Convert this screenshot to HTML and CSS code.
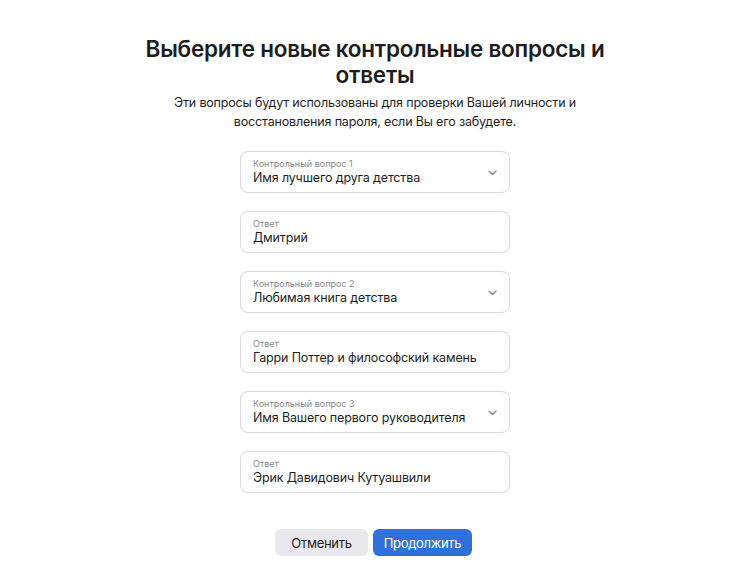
FILE: index.html
```html
<!DOCTYPE html>
<html lang="ru">
<head>
<meta charset="utf-8">
<link rel="stylesheet" href="styles.css">
</head>
<body>
<main class="page">
  <h1 class="title">Выберите новые контрольные вопросы и ответы</h1>
  <p class="subtitle">Эти вопросы будут использованы для проверки Вашей личности и восстановления пароля, если Вы его забудете.</p>
  <div class="fields">
    <div class="field select">
      <div class="field-text">
        <span class="label">Контрольный вопрос 1</span>
        <span class="value">Имя лучшего друга детства</span>
      </div>
      <svg class="chev" width="9" height="6" viewBox="0 0 9 6"><path d="M1 1.2l3.5 3.3L8 1.2" fill="none" stroke="#8a8a8e" stroke-width="1.3" stroke-linecap="round" stroke-linejoin="round"/></svg>
    </div>
    <div class="field">
      <div class="field-text">
        <span class="label">Ответ</span>
        <span class="value">Дмитрий</span>
      </div>
    </div>
    <div class="field select">
      <div class="field-text">
        <span class="label">Контрольный вопрос 2</span>
        <span class="value">Любимая книга детства</span>
      </div>
      <svg class="chev" width="9" height="6" viewBox="0 0 9 6"><path d="M1 1.2l3.5 3.3L8 1.2" fill="none" stroke="#8a8a8e" stroke-width="1.3" stroke-linecap="round" stroke-linejoin="round"/></svg>
    </div>
    <div class="field">
      <div class="field-text">
        <span class="label">Ответ</span>
        <span class="value">Гарри Поттер и философский камень</span>
      </div>
    </div>
    <div class="field select">
      <div class="field-text">
        <span class="label">Контрольный вопрос 3</span>
        <span class="value">Имя Вашего первого руководителя</span>
      </div>
      <svg class="chev" width="9" height="6" viewBox="0 0 9 6"><path d="M1 1.2l3.5 3.3L8 1.2" fill="none" stroke="#8a8a8e" stroke-width="1.3" stroke-linecap="round" stroke-linejoin="round"/></svg>
    </div>
    <div class="field">
      <div class="field-text">
        <span class="label">Ответ</span>
        <span class="value">Эрик Давидович Кутуашвили</span>
      </div>
    </div>
  </div>
  <div class="actions">
    <button class="btn btn-secondary">Отменить</button>
    <button class="btn btn-primary">Продолжить</button>
  </div>
</main>
</body>
</html>
```
FILE: styles.css
```css
* { box-sizing: border-box; }
html, body { margin: 0; background: #ffffff; }
body {
  font-family: Inter, "Noto Sans", "Liberation Sans", sans-serif;
  color: #1d1d1f;
  width: 750px;
  height: 580px;
  overflow: hidden;
}
.page {
  display: flex;
  flex-direction: column;
  align-items: center;
  padding-top: 36px;
}
.title {
  margin: 0;
  width: 480px;
  text-align: center;
  font-size: 22.5px;
  line-height: 26px;
  font-weight: 600;
  letter-spacing: -0.24px;
}
.subtitle {
  margin: 5px 0 0;
  width: 420px;
  text-align: center;
  font-size: 12.5px;
  line-height: 19px;
  letter-spacing: -0.17px;
}
.fields {
  margin-top: 20px;
  width: 270px;
  display: flex;
  flex-direction: column;
  gap: 18px;
}
.field {
  height: 42px;
  border: 1px solid #d9d9de;
  border-radius: 8px;
  padding: 6px 12px 5px;
  display: flex;
  align-items: center;
  justify-content: space-between;
}
.field-text {
  display: flex;
  flex-direction: column;
  align-self: stretch;
}
.label {
  font-size: 9px;
  line-height: 12px;
  color: #86868b;
}
.value {
  font-size: 12.5px;
  line-height: 16px;
  letter-spacing: -0.15px;
  color: #1d1d1f;
}
.chev { flex: none; }
.actions {
  margin-top: 36px;
  padding-right: 3px;
  display: flex;
  gap: 5px;
}
.btn {
  font-family: inherit;
  font-size: 13px;
  letter-spacing: -0.3px;
  height: 27px;
  border: none;
  border-radius: 6px;
  padding: 0;
  text-align: center;
}
.btn-secondary { background: #e8e8ed; color: #1d1d1f; width: 93px; }
.btn-primary { background: #2f71da; color: #ffffff; width: 99px; }
```
